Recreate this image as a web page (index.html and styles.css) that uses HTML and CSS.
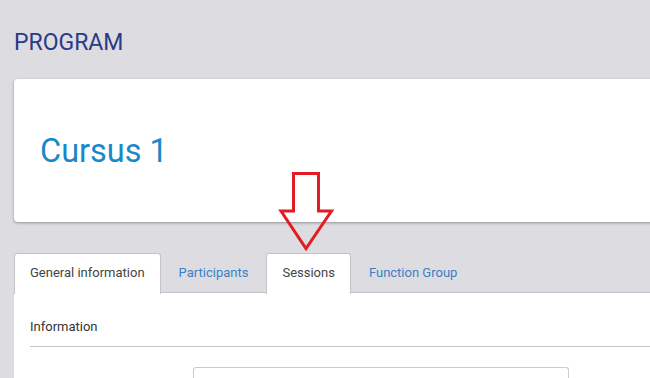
FILE: index.html
```html
<!DOCTYPE HTML>
<html lang="en">

<head>
    <meta charset="utf-8">
    <title>Program - Cursus 1</title>

    <link rel="stylesheet" href="styles.css">
</head>

<body>
    <div class="main">
        <h1 class="page-title">PROGRAM</h1>

        <div class="card">
            <h2 class="program-name">Cursus 1</h2>
        </div>

        <ul class="tabs">
            <li class="tab active">General information</li>
            <li class="tab">Participants</li>
            <li class="tab highlight">Sessions</li>
            <li class="tab">Function Group</li>
        </ul>

        <div class="tab-content">
            <div class="section-title">Information</div>
            <div class="form-row">
                <div class="input-box"></div>
            </div>
        </div>
    </div>

    <!-- red arrow pointing at the Sessions tab -->
    <svg class="arrow" width="62" height="88" viewBox="0 0 62 88">
        <polygon points="17.5,5.5 42.5,5.5 42.5,43 55.5,43 30,80.5 5,43 17.5,43"
                 fill="none" stroke="#e31b23" stroke-width="3" stroke-linejoin="miter"/>
    </svg>
</body>

</html>
```

FILE: styles.css
```css
*{
    box-sizing: border-box;
    padding: 0;
    margin: 0;
}

body{
    background: #dddce1;
    font-family: Roboto, "Liberation Sans", sans-serif;
    overflow: hidden;
}

.main{
    padding: 0 0 0 14px;
    width: 680px;
}

.page-title{
    font-size: 23px;
    font-weight: 400;
    color: #283b86;
    line-height: 28px;
    padding-top: 29px;
    height: 79px;
}

.card{
    height: 143px;
    background-color: #ffffff;
    border-radius: 4px;
    box-shadow: 0 1px 3px rgba(0, 0, 0, 0.35);
    padding: 52px 0 0 26px;
}

.program-name{
    font-size: 32.5px;
    font-weight: 400;
    color: #1a88c8;
    line-height: 40px;
}

.tabs{
    list-style: none;
    display: flex;
    margin-top: 31px;
    height: 40px;
    border-bottom: 1px solid #c4c4c8;
}

.tab{
    padding: 0 17px;
    height: 40px;
    line-height: 38px;
    font-size: 13px;
    color: #3b80c6;
    border: 1px solid transparent;
    border-bottom: 0;
    border-radius: 3px 3px 0 0;
}

.tab.active,
.tab.highlight{
    background-color: #ffffff;
    color: #444444;
    border-color: #c4c4c8;
    height: 41px;
    padding: 0 15px;
}

.tab-content{
    background-color: #ffffff;
    padding: 25px 0 0 16px;
    height: 85px;
}

.section-title{
    font-size: 13px;
    color: #333333;
    line-height: 17px;
    padding-bottom: 11px;
    border-bottom: 1px solid #c2c2c2;
}

.form-row{
    padding: 20px 0 0 163px;
}

.input-box{
    width: 376px;
    height: 20px;
    border: 1px solid #cccccc;
    border-bottom: 0;
    border-radius: 3px 3px 0 0;
}

.arrow{
    position: absolute;
    left: 276px;
    top: 168px;
}
```
